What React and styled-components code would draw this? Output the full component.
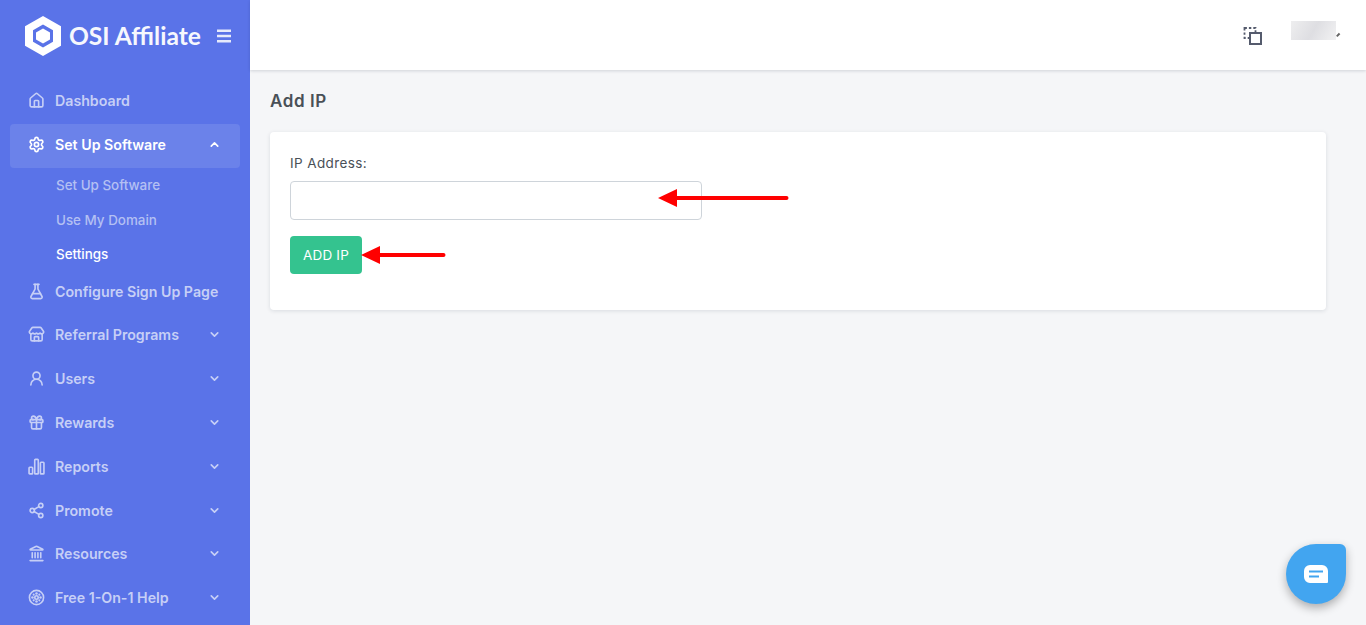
import React from "react"
import styled, { createGlobalStyle } from "styled-components"
import {
  House,
  Settings,
  FlaskConical,
  Store,
  UserRound,
  Gift,
  Share2,
  Landmark,
  ChevronDown,
  ChevronUp,
} from "lucide-react"

const GlobalStyle = createGlobalStyle`
  html, body {
    margin: 0;
    height: 100%;
    overflow: hidden;
    background: #f5f6f8;
    font-family: "Inter", "Liberation Sans", sans-serif;
  }
  * { box-sizing: border-box; }
`

const ReportsIcon = (props) => (
  <svg viewBox="0 0 24 24" fill="none" stroke="currentColor" strokeWidth="2.2" {...props}>
    <rect x="1.5" y="13" width="5" height="9.5" rx="1" />
    <rect x="9.5" y="2" width="5" height="20.5" rx="1" />
    <rect x="17.5" y="6" width="5" height="16.5" rx="1" />
  </svg>
)

const WheelIcon = (props) => (
  <svg viewBox="0 0 24 24" fill="none" stroke="currentColor" strokeWidth="2.4" {...props}>
    <circle cx="12" cy="12" r="10" />
    <circle cx="12" cy="12" r="2.4" />
    <circle cx="12" cy="6.3" r="1.8" fill="currentColor" stroke="none" />
    <circle cx="12" cy="17.7" r="1.8" fill="currentColor" stroke="none" />
    <circle cx="6.3" cy="12" r="1.8" fill="currentColor" stroke="none" />
    <circle cx="17.7" cy="12" r="1.8" fill="currentColor" stroke="none" />
    <circle cx="8" cy="8" r="1.5" fill="currentColor" stroke="none" />
    <circle cx="16" cy="8" r="1.5" fill="currentColor" stroke="none" />
    <circle cx="8" cy="16" r="1.5" fill="currentColor" stroke="none" />
    <circle cx="16" cy="16" r="1.5" fill="currentColor" stroke="none" />
  </svg>
)

const lowerItems = [
  { label: "Configure Sign Up Page", Icon: FlaskConical },
  { label: "Referral Programs", Icon: Store, more: true },
  { label: "Users", Icon: UserRound, more: true },
  { label: "Rewards", Icon: Gift, more: true },
  { label: "Reports", Icon: ReportsIcon, more: true },
  { label: "Promote", Icon: Share2, more: true },
  { label: "Resources", Icon: Landmark, more: true },
  { label: "Free 1-On-1 Help", Icon: WheelIcon, more: true },
]

const App = () => {
  return (
    <Page>
      <GlobalStyle />
      <Sidebar>
        <Brand>
          <svg width="38" height="42" viewBox="0 0 38 42">
            <path
              fillRule="evenodd"
              fill="#fff"
              d="M19 1 37 11.2V30.8L19 41 1 30.8V11.2ZM19 9.5 9 15.2V26.8L19 32.5 29 26.8V15.2Z"
            />
            <path fill="#fff" d="M19 13.5 26 17.4V24.6L19 28.5 12 24.6V17.4Z" />
          </svg>
          <BrandName>OSI Affiliate</BrandName>
          <Burger viewBox="0 0 16 14">
            <path d="M1 1.8h14M1 7h14M1 12.2h14" stroke="#fff" strokeWidth="2.4" opacity=".85" />
          </Burger>
        </Brand>
        <Nav>
          <NavRow>
            <House size={17} strokeWidth={2.3} />
            <NavLabel>Dashboard</NavLabel>
          </NavRow>
          <OpenRow>
            <Settings size={17} strokeWidth={2.4} />
            <NavLabel>Set Up Software</NavLabel>
            <ChevronUp size={13} strokeWidth={3} />
          </OpenRow>
          <SubList>
            <SubItem>Set Up Software</SubItem>
            <SubItem>Use My Domain</SubItem>
            <SubItem $active>Settings</SubItem>
          </SubList>
          {lowerItems.map(({ label, Icon, more }) => (
            <NavRow key={label}>
              <Icon width={17} height={17} strokeWidth={2.3} />
              <NavLabel>{label}</NavLabel>
              {more && <ChevronDown size={13} strokeWidth={3} />}
            </NavRow>
          ))}
        </Nav>
      </Sidebar>
      <Main>
        <Topbar>
          <svg width="20" height="20" viewBox="0 0 20 20" fill="none" stroke="#555b6d">
            <rect x="2.5" y="3" width="11" height="10" strokeWidth="1.8" strokeDasharray="2.4 2" />
            <rect x="8" y="8" width="11" height="11" fill="#fff" strokeWidth="2" />
          </svg>
          <UserBlur />
          <UserCaret />
        </Topbar>
        <Content>
          <Title>Add IP</Title>
          <Card>
            <Label>IP Address:</Label>
            <FieldRow>
              <Input />
              <InputArrow width="132" height="18" viewBox="0 0 132 18">
                <path d="M1 9 20 0V7H129.5a2 2 0 0 1 0 4H20V18Z" fill="#f00" />
              </InputArrow>
            </FieldRow>
            <ButtonRow>
              <Button>ADD IP</Button>
              <ButtonArrow width="86" height="18" viewBox="0 0 86 18">
                <path d="M1 9 20 0V7H83.5a2 2 0 0 1 0 4H20V18Z" fill="#f00" />
              </ButtonArrow>
            </ButtonRow>
          </Card>
        </Content>
      </Main>
      <ChatBubble>
        <svg width="24" height="18" viewBox="0 0 24 18">
          <path
            fillRule="evenodd"
            fill="#fff"
            d="M6 0H18a6 6 0 0 1 6 6V17a1 1 0 0 1-1 1H6a6 6 0 0 1-6-6V6a6 6 0 0 1 6-6ZM5 5.5V7.5H19V5.5ZM5 10.5V12.5H15V10.5Z"
          />
        </svg>
      </ChatBubble>
    </Page>
  )
}

export default App

const Page = styled.div`
  display: grid;
  grid-template-columns: 250px 1fr;
  height: 625px;
  overflow: hidden;
`

const Sidebar = styled.aside`
  background: #5a73e8;
  display: flex;
  flex-direction: column;
  overflow: hidden;
`

const Brand = styled.div`
  height: 79px;
  display: flex;
  align-items: center;
  padding: 0 18px 8px 24px;
  color: #fff;
`

const BrandName = styled.div`
  font-family: "Lato", sans-serif;
  font-size: 24.6px;
  font-weight: 700;
  margin-left: 7px;
  white-space: nowrap;
  opacity: 0.95;
`

const Burger = styled.svg`
  width: 16px;
  height: 14px;
  margin-left: auto;
`

const Nav = styled.nav`
  display: flex;
  flex-direction: column;
  padding: 0 10px;
`

const NavRow = styled.div`
  height: 43.8px;
  display: flex;
  align-items: center;
  gap: 10px;
  padding: 0 19px 0 18px;
  color: #c6cff6;
  font-size: 14.2px;
  font-weight: 600;
  flex-shrink: 0;

  svg {
    flex-shrink: 0;
  }
`

const OpenRow = styled(NavRow)`
  height: 44px;
  margin-top: 1px;
  padding-bottom: 3px;
  background: #6b82ea;
  border-radius: 4px;
  color: #fff;
`

const NavLabel = styled.span`
  flex: 1;
  white-space: nowrap;
`

const SubList = styled.div`
  display: flex;
  flex-direction: column;
  padding: 0 0 0 46px;
  margin-bottom: -2px;
`

const SubItem = styled.div`
  height: 34.5px;
  display: flex;
  align-items: center;
  font-size: 13.4px;
  font-weight: 500;
  color: ${(p) => (p.$active ? "#fff" : "#b4c0f3")};
`

const Main = styled.main`
  display: flex;
  flex-direction: column;
  min-width: 0;
`

const Topbar = styled.header`
  height: 70px;
  background: #fff;
  box-shadow: 0 1px 3px rgba(15, 34, 58, 0.16);
  display: flex;
  align-items: center;
  justify-content: flex-end;
  padding: 0 26px 0 0;
  position: relative;
`

const UserBlur = styled.div`
  width: 45px;
  height: 19px;
  margin: 0 0 9px 29px;
  background: linear-gradient(120deg, #eeeeef, #dedee2 50%, #f2f2f3);
`

const UserCaret = styled.div`
  width: 4px;
  height: 1.5px;
  background: #666;
  transform: rotate(-45deg);
`

const Content = styled.div`
  padding: 20px 40px 0 20px;
`

const Title = styled.h1`
  margin: 0 0 20px;
  font-size: 17px;
  line-height: 22px;
  font-weight: 600;
  letter-spacing: 0.6px;
  color: #495057;
`

const Card = styled.section`
  background: #fff;
  border-radius: 4px;
  box-shadow: 0 1px 4px rgba(15, 34, 58, 0.12);
  padding: 21px 20px 20px;
  height: 178px;
`

const Label = styled.label`
  display: block;
  font-size: 13.5px;
  line-height: 21px;
  font-weight: 400;
  letter-spacing: 0.4px;
  color: #495057;
  margin-bottom: 7px;
`

const FieldRow = styled.div`
  position: relative;
  margin-bottom: 16px;
`

const Input = styled.input`
  display: block;
  width: 412px;
  height: 39px;
  border: 1px solid #ced4da;
  border-radius: 4px;
  background: #fff;
`

const InputArrow = styled.svg`
  position: absolute;
  left: 367px;
  top: 8px;
`

const ButtonRow = styled.div`
  position: relative;
`

const Button = styled.button`
  width: 72px;
  height: 38px;
  border: none;
  border-radius: 4px;
  background: #34c38f;
  color: #fff;
  font-family: inherit;
  font-size: 13.5px;
  letter-spacing: 0.2px;
  padding: 0;
`

const ButtonArrow = styled.svg`
  position: absolute;
  left: 70px;
  top: 10px;
`

const ChatBubble = styled.div`
  position: fixed;
  left: 1286px;
  top: 544px;
  width: 60px;
  height: 60px;
  background: #42a5f0;
  border-radius: 50% 6px 50% 50%;
  box-shadow: 0 4px 10px rgba(0, 0, 0, 0.3);
  display: flex;
  align-items: center;
  justify-content: center;
`
